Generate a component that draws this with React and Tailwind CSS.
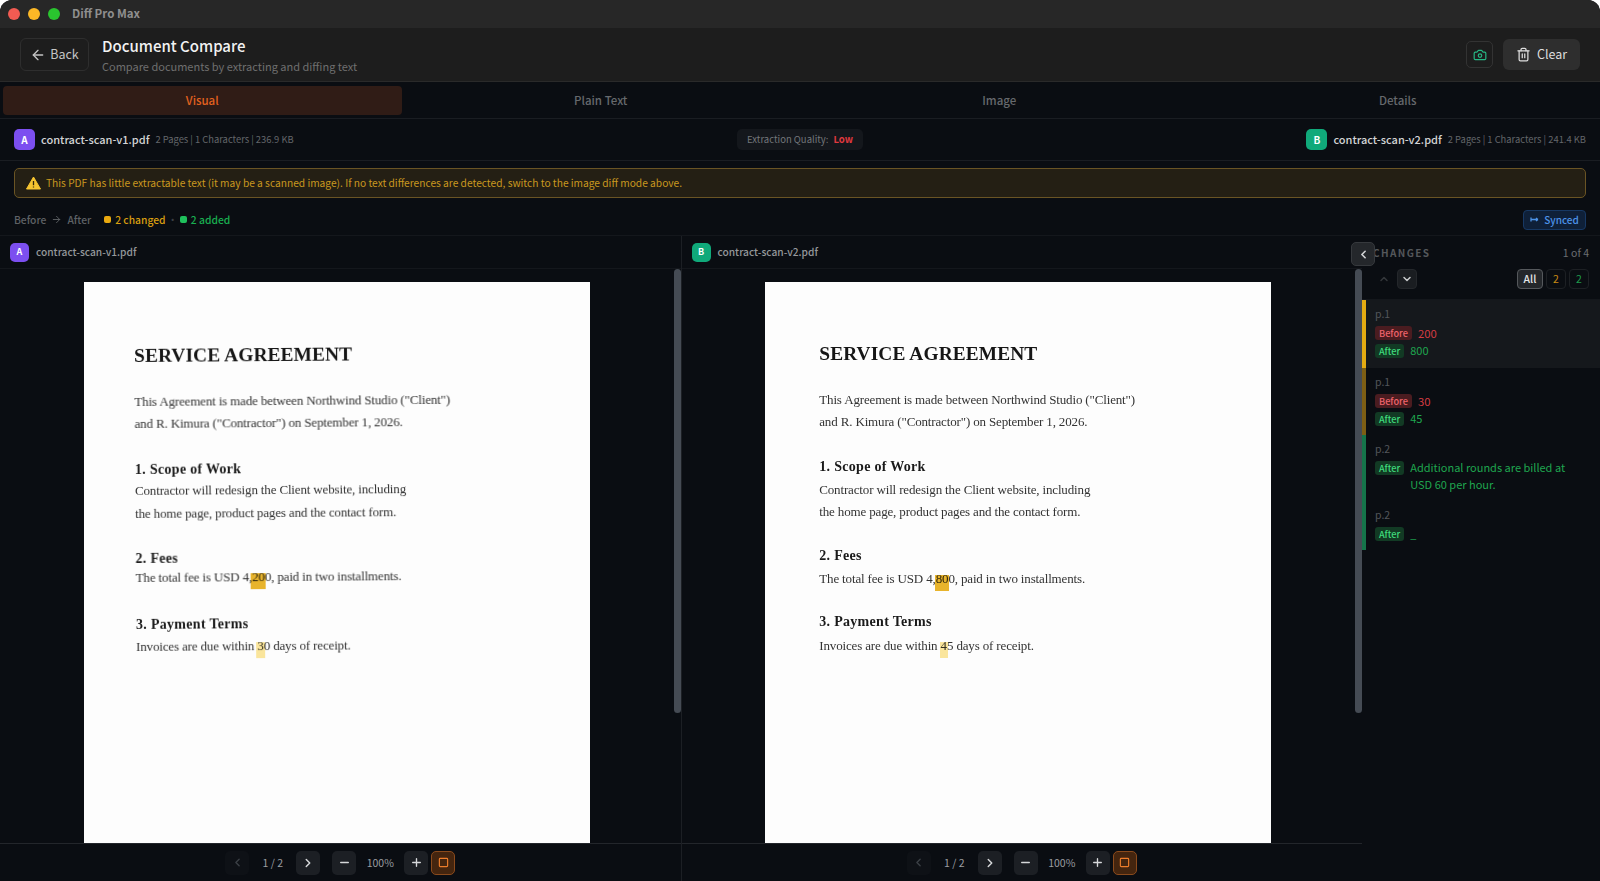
import { ArrowLeft, ArrowRight, Camera, Trash2, ChevronUp, ChevronDown, ChevronLeft, ChevronRight, Minus, Plus, Square } from 'lucide-react';

const TABS = ['Visual', 'Plain Text', 'Image', 'Details'];

function Badge({ letter, green, small }) {
  return (
    <div className={`${small ? 'w-[19px] h-[19px] rounded-[5px] text-[9px]' : 'w-[21px] h-[21px] rounded-[5px] text-[10px]'} ${green ? 'bg-[#10a97a]' : 'bg-[#7c4ff0]'} flex items-center justify-center font-bold text-white shrink-0`}>
      {letter}
    </div>
  );
}

function Mark({ children, strong, top }) {
  return (
    <span className="relative">
      {children}
      <span className={`absolute -inset-x-px h-4 mix-blend-multiply ${top} ${strong ? 'bg-[#e8b42c]' : 'bg-[#fae59c]'}`}></span>
    </span>
  );
}

function Heading({ children, className }) {
  return <div className={`font-bold text-[14px] leading-[22px] text-[#1a1a1a] tracking-[0.3px] whitespace-nowrap ${className}`}>{children}</div>;
}

function Line({ children, className }) {
  return <div className={`text-[13px] leading-[22px] text-[#333333] tracking-[-0.15px] whitespace-nowrap ${className}`}>{children}</div>;
}

function DocPage({ right }) {
  return (
    <div className={`w-[506px] h-[716px] bg-[#fdfdfd] shrink-0 mt-[13px] ${right ? 'pl-[54px] pt-[60px]' : 'pl-[50px] pt-[62px]'} font-['Liberation_Serif',serif]`}>
      <div className={`blur-[0.3px] ${right ? '' : '-rotate-[0.4deg] origin-top-left'}`}>
        <div className="font-bold text-[19.4px] leading-[24px] text-[#161616] tracking-[0.1px] whitespace-nowrap">SERVICE AGREEMENT</div>
        <Line className="mt-[23px]">This Agreement is made between Northwind Studio ("Client")</Line>
        <Line>and R. Kimura ("Contractor") on September 1, 2026.</Line>
        <Heading className={right ? 'mt-[23px]' : 'mt-[24px]'}>1. Scope of Work</Heading>
        <Line className={right ? 'mt-[1px]' : '-mt-px'}>Contractor will redesign the Client website, including</Line>
        <Line className={right ? '' : 'mt-[1px]'}>the home page, product pages and the contact form.</Line>
        <Heading className={right ? 'mt-[22px]' : 'mt-[23px]'}>2. Fees</Heading>
        <Line className={right ? 'mt-px' : '-mt-[3px]'}>
          The total fee is USD 4,
          <Mark strong top="top-[4px]">{right ? '80' : '20'}</Mark>
          0, paid in two installments.
        </Line>
        <Heading className={right ? 'mt-[21px]' : 'mt-[25px]'}>3. Payment Terms</Heading>
        <Line className={right ? 'mt-[2px]' : ''}>
          Invoices are due within <Mark top="top-[4px]">{right ? '4' : '3'}</Mark>
          {right ? '5' : '0'} days of receipt.
        </Line>
      </div>
    </div>
  );
}

function PagerButton({ children, dim }) {
  return (
    <button className={`w-6 h-6 rounded-[5px] flex items-center justify-center ${dim ? 'bg-[#0e1116] text-[#3c4046]' : 'bg-[#1c1f24] text-[#d6d8da]'}`}>
      {children}
    </button>
  );
}

function Pane({ name, letter, green, right }) {
  return (
    <div className={`flex-1 min-w-0 flex flex-col ${right ? '' : 'border-r border-[#1c1f24]'}`}>
      <div className="h-[33px] shrink-0 flex items-center gap-[7px] pl-[10px] border-b border-[#14171c]">
        <Badge letter={letter} green={green} small />
        <span className="text-[10.2px] font-medium text-[#95989b]">{name}</span>
      </div>
      <div className="flex-1 min-h-0 flex">
        <div className="flex-1 min-w-0 flex justify-center overflow-hidden">
          <DocPage right={right} />
        </div>
        <div className="w-[7px] shrink-0">
          <div className="h-[444px] bg-[#454b54] rounded-full"></div>
        </div>
      </div>
      <div className="h-[38px] shrink-0 border-t border-[#23262b] flex items-center justify-center">
        <PagerButton dim><ChevronLeft size={13} strokeWidth={2.5} /></PagerButton>
        <span className="text-[10.5px] text-[#9a9da1] w-[47px] text-center">1 / 2</span>
        <PagerButton><ChevronRight size={14} strokeWidth={2.5} /></PagerButton>
        <div className="w-[12px]"></div>
        <PagerButton><Minus size={13} strokeWidth={2.5} /></PagerButton>
        <span className="text-[10.5px] text-[#9a9da1] w-[48px] text-center">100%</span>
        <PagerButton><Plus size={13} strokeWidth={2.5} /></PagerButton>
        <button className="ml-[3px] w-6 h-6 rounded-[5px] flex items-center justify-center bg-[#44250f] border border-[#8a4a1c] text-[#ed7d2b]">
          <Square size={11} strokeWidth={2.5} />
        </button>
      </div>
    </div>
  );
}

function Tag({ kind }) {
  const before = kind === 'Before';
  return (
    <span className={`shrink-0 h-[14px] px-[4px] rounded-[3px] text-[9.2px] font-medium leading-[14px] ${before ? 'bg-[#4a1c20] text-[#f0656c]' : 'bg-[#123a24] text-[#3fdc7c]'}`}>
      {kind}
    </span>
  );
}

function Change({ page, before, after, bar, active, className }) {
  return (
    <div className={`border-l-4 pl-[9px] pr-3 pt-[7px] ${bar} ${active ? 'bg-[#15181c]' : ''} ${className}`}>
      <div className="text-[10.5px] leading-[14px] text-[#53565b] mb-[3px]">{page}</div>
      {before && (
        <div className="flex items-center gap-[6px] h-[18px]">
          <Tag kind="Before" />
          <span className="text-[11.3px] text-[#d43c43]">{before}</span>
        </div>
      )}
      <div className={`flex items-start gap-[6px] ${before ? '' : 'mt-[2px]'}`}>
        <div className="pt-[2px] flex"><Tag kind="After" /></div>
        <span className="text-[11px] leading-[17px] text-[#1fa64f]">{after}</span>
      </div>
    </div>
  );
}

export default function App() {
  return (
    <div className="w-[1600px] h-[881px] bg-white overflow-hidden font-['Noto_Sans_CJK_SC','Noto_Sans',sans-serif]">
      <div className="h-full rounded-t-[12px] overflow-hidden bg-[#0a0d12] flex flex-col">
        <div className="h-[28px] shrink-0 bg-[#272727] flex items-center pl-[8px] gap-[8px]">
          <span className="w-3 h-3 rounded-full bg-[#f25b52]"></span>
          <span className="w-3 h-3 rounded-full bg-[#fcb826]"></span>
          <span className="w-3 h-3 rounded-full bg-[#2ac52f]"></span>
          <span className="ml-[4px] text-[11.5px] font-bold text-[#8f8f8f]">Diff Pro Max</span>
        </div>

        <div className="h-[54px] shrink-0 bg-[#1d1d1d] border-b border-[#2a2a2a] flex items-center pl-[20px] pr-[20px]">
          <button className="h-[33px] w-[69px] rounded-[6px] border border-[#2e2e2e] flex items-center justify-center gap-[4px] text-[12.5px] text-[#c4c4c4]">
            <ArrowLeft size={16} />
            Back
          </button>
          <div className="ml-[13px]">
            <div className="text-[15px] leading-[20px] font-medium text-[#f2f2f2]">Document Compare</div>
            <div className="text-[11px] leading-[16px] mt-[2px] text-[#6f6f6f]">Compare documents by extracting and diffing text</div>
          </div>
          <div className="ml-auto flex items-center gap-[10px]">
            <button className="w-[27px] h-[27px] rounded-[5px] border border-[#333] flex items-center justify-center text-[#27b885]">
              <Camera size={14} />
            </button>
            <button className="w-[77px] h-[31px] rounded-[6px] bg-[#2e2e2e] flex items-center justify-center gap-[6px] text-[12.5px] text-[#dedede]">
              <Trash2 size={15} />
              Clear
            </button>
          </div>
        </div>

        <div className="h-[37px] shrink-0 flex items-center px-[3px] border-b border-[#1a1d22]">
          {TABS.map((tab, i) => (
            <div key={tab} className={`flex-1 h-[29px] pt-px rounded-[4px] flex items-center justify-center text-[11.5px] font-medium ${i === 0 ? 'bg-[#301c16] text-[#e2611f]' : 'text-[#66696d]'}`}>
              {tab}
            </div>
          ))}
        </div>

        <div className="h-[42px] shrink-0 flex items-center justify-between pl-[14px] pr-[14px] border-b border-[#1a1d22]">
          <div className="flex items-center gap-[6px] w-[500px]">
            <Badge letter="A" />
            <span className="text-[11px] font-medium text-[#d4d5d6]">contract-scan-v1.pdf</span>
            <span className="text-[9.4px] text-[#63666a]">2 Pages | 1 Characters | 236.9 KB</span>
          </div>
          <div className="h-[21px] px-[10px] rounded-[5px] bg-[#14171c] flex items-center gap-[5px] text-[9.5px] text-[#73767a]">
            Extraction Quality:
            <span className="font-bold text-[#e0393f]">Low</span>
          </div>
          <div className="flex items-center justify-end gap-[6px] w-[500px]">
            <Badge letter="B" green />
            <span className="text-[11px] font-medium text-[#d4d5d6]">contract-scan-v2.pdf</span>
            <span className="text-[9.4px] text-[#63666a]">2 Pages | 1 Characters | 241.4 KB</span>
          </div>
        </div>

        <div className="shrink-0 px-[14px] pt-[7px]">
          <div className="h-[30px] rounded-[5px] border border-[#6a5424] bg-[#241f14] flex items-center pl-[11px] gap-[5px]">
            <svg width="15" height="14" viewBox="0 0 15 14">
              <path d="M7.5 1 14.5 13H.5Z" fill="#f7c531" stroke="#f7c531" strokeLinejoin="round" />
              <path d="M7.5 5v4.2M7.5 10.4v1.2" stroke="#33270a" strokeWidth="1.3" />
            </svg>
            <span className="text-[10.2px] text-[#c9981f]">This PDF has little extractable text (it may be a scanned image). If no text differences are detected, switch to the image diff mode above.</span>
          </div>
        </div>

        <div className="h-[38px] shrink-0 flex items-center pl-[14px] pr-[14px] pt-[6px] border-b border-[#14171c] text-[10.3px]">
          <span className="text-[#5e6165] font-medium">Before</span>
          <ArrowRight size={11} className="mx-[5px] text-[#5e6165]" />
          <span className="text-[#5e6165] font-medium">After</span>
          <span className="ml-[13px] w-[7px] h-[7px] rounded-[2px] bg-[#eaa90f]"></span>
          <span className="ml-[4px] font-medium text-[#d99e10]">2 changed</span>
          <span className="mx-[2px] text-[#3c3f44]">·</span>
          <span className="w-[7px] h-[7px] rounded-[2px] bg-[#1fc05c]"></span>
          <span className="ml-[4px] font-medium text-[#19ad50]">2 added</span>
          <div className="ml-auto h-[20px] w-[63px] rounded-[4px] bg-[#0f2038] border border-[#173863] flex items-center justify-center gap-[5px] text-[10px] font-medium text-[#4d93e8]">
            <svg width="9" height="7" viewBox="0 0 9 7" fill="none" stroke="currentColor" strokeWidth="1.3">
              <path d="M1 3.5h7M1 1.5v4M8 3.5 6 2M8 3.5 6 5" />
            </svg>
            Synced
          </div>
        </div>

        <div className="flex-1 min-h-0 flex relative">
          <div className="w-[1362px] shrink-0 flex">
            <Pane name="contract-scan-v1.pdf" letter="A" />
            <Pane name="contract-scan-v2.pdf" letter="B" green right />
          </div>
          <button className="absolute left-[1351px] top-[6px] w-6 h-6 rounded-[5px] bg-[#24272b] border border-[#36393d] flex items-center justify-center text-[#d0d2d4]">
            <ChevronLeft size={13} strokeWidth={3} />
          </button>
          <div className="flex-1 min-w-0 flex flex-col">
            <div className="h-[33px] shrink-0 flex items-center justify-between pl-[11px] pr-[11px]">
              <span className="text-[10px] font-bold tracking-[1.4px] text-[#54575b]">CHANGES</span>
              <span className="text-[10.5px] text-[#6b6e72]">1 of 4</span>
            </div>
            <div className="h-[31px] shrink-0 flex items-start pl-[12px] pr-[11px] border-b border-[#14171c]">
              <button className="w-[20px] h-[20px] rounded-[4px] flex items-center justify-center text-[#34373b]"><ChevronUp size={12} strokeWidth={3} /></button>
              <button className="ml-[3px] w-[20px] h-[20px] rounded-[4px] bg-[#1a1d21] border border-[#24272b] flex items-center justify-center text-[#c8cacc]"><ChevronDown size={12} strokeWidth={3} /></button>
              <div className="ml-auto flex gap-[3px]">
                <span className="w-[26px] h-[20px] rounded-[4px] bg-[#24272b] border border-[#55585c] flex items-center justify-center text-[10.5px] font-medium text-[#e6e7e8]">All</span>
                <span className="w-[20px] h-[20px] rounded-[4px] border border-[#1d2024] flex items-center justify-center text-[10.5px] text-[#c98a14]">2</span>
                <span className="w-[20px] h-[20px] rounded-[4px] border border-[#1d2024] flex items-center justify-center text-[10.5px] text-[#1f9c4c]">2</span>
              </div>
            </div>
            <Change page="p.1" before="200" after="800" bar="border-[#e4ab12]" active className="h-[68px]" />
            <Change page="p.1" before="30" after="45" bar="border-[#7d5e14]" className="h-[67px]" />
            <Change page="p.2" after="Additional rounds are billed at USD 60 per hour." bar="border-[#15744a]" className="h-[66px]" />
            <Change page="p.2" after="_" bar="border-[#15744a]" className="h-[49px]" />
          </div>
        </div>
      </div>
    </div>
  );
}
